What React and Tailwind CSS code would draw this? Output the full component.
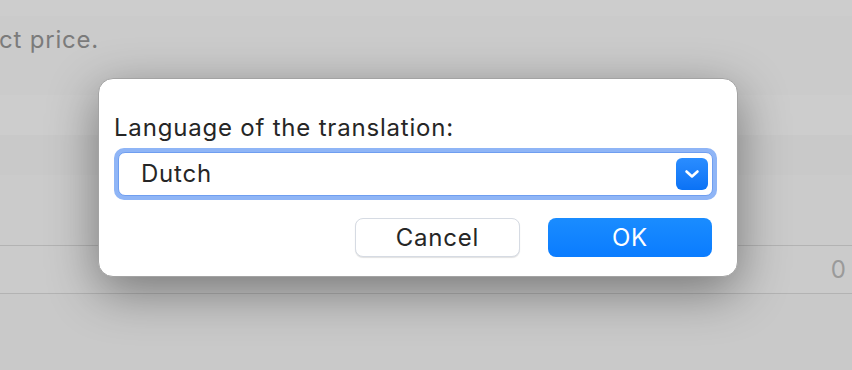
import React from 'react';

const font = { fontFamily: 'Inter, "Noto Sans", sans-serif' };

const Chevron = () => (
  <svg width="16" height="10" viewBox="0 0 16 10" fill="none">
    <path d="M2.5 2.5 L8 7.5 L13.5 2.5" stroke="white" strokeWidth="2.6" strokeLinecap="round" strokeLinejoin="round" />
  </svg>
);

const Backdrop = () => (
  <div className="flex flex-col w-full h-full bg-[#cbcbcb]">
    <div className="h-[16px] bg-[#cdcdcd]" />
    <div className="h-[79px] flex items-start pt-[6px] text-[24px] tracking-[0.8px] text-[#7b7b7b] -ml-[1px]">ct price.</div>
    <div className="h-[40px] bg-[#cdcdcd]" />
    <div className="h-[40px] bg-[#c9c9c9]" />
    <div className="h-[71px] bg-[#cbcbcb] border-b border-[#b3b3b3]" />
    <div className="h-[48px] flex items-center justify-end pr-[6px] text-[24px] text-[#9a9a9a] border-b border-[#b3b3b3]">0</div>
    <div className="flex-1 bg-[#c9c9c9]" />
  </div>
);

const Dialog = () => (
  <div className="absolute left-[98px] top-[78px] w-[640px] h-[199px] bg-white rounded-[15px] border border-[#a3a3a3] shadow-[0_14px_50px_rgba(0,0,0,0.42)] px-[15px] pt-[35px] tracking-[0.8px]">
    <div className="text-[24px] leading-[28px] text-[#262626]">Language of the translation:</div>
    <div className="mt-[6px] w-[603px] h-[52px] rounded-[10px] bg-[#8fb5f6] p-[4px]">
      <div className="h-full rounded-[7px] bg-white border border-[#6f9ef0] flex items-center pl-[22px] pr-[4px]">
        <span className="flex-1 text-[24px] text-[#262626]">Dutch</span>
        <div className="w-[32px] h-[32px] rounded-[6px] bg-gradient-to-b from-[#2a8dff] to-[#0a72f5] flex items-center justify-center">
          <Chevron />
        </div>
      </div>
    </div>
    <div className="mt-[18px] flex justify-end gap-[28px] pr-[10px]">
      <button className="w-[165px] h-[39px] rounded-[8px] bg-white border border-[#d6dbe3] shadow-[0_1px_1px_rgba(0,0,0,0.12)] text-[24px] leading-none text-[#262626]">Cancel</button>
      <button className="w-[164px] h-[39px] rounded-[8px] bg-gradient-to-b from-[#1a8cff] to-[#0a7cff] text-[24px] leading-none text-white">OK</button>
    </div>
  </div>
);

export default function App() {
  return (
    <div className="relative w-[852px] h-[370px] overflow-hidden" style={font}>
      <Backdrop />
      <Dialog />
    </div>
  );
}
